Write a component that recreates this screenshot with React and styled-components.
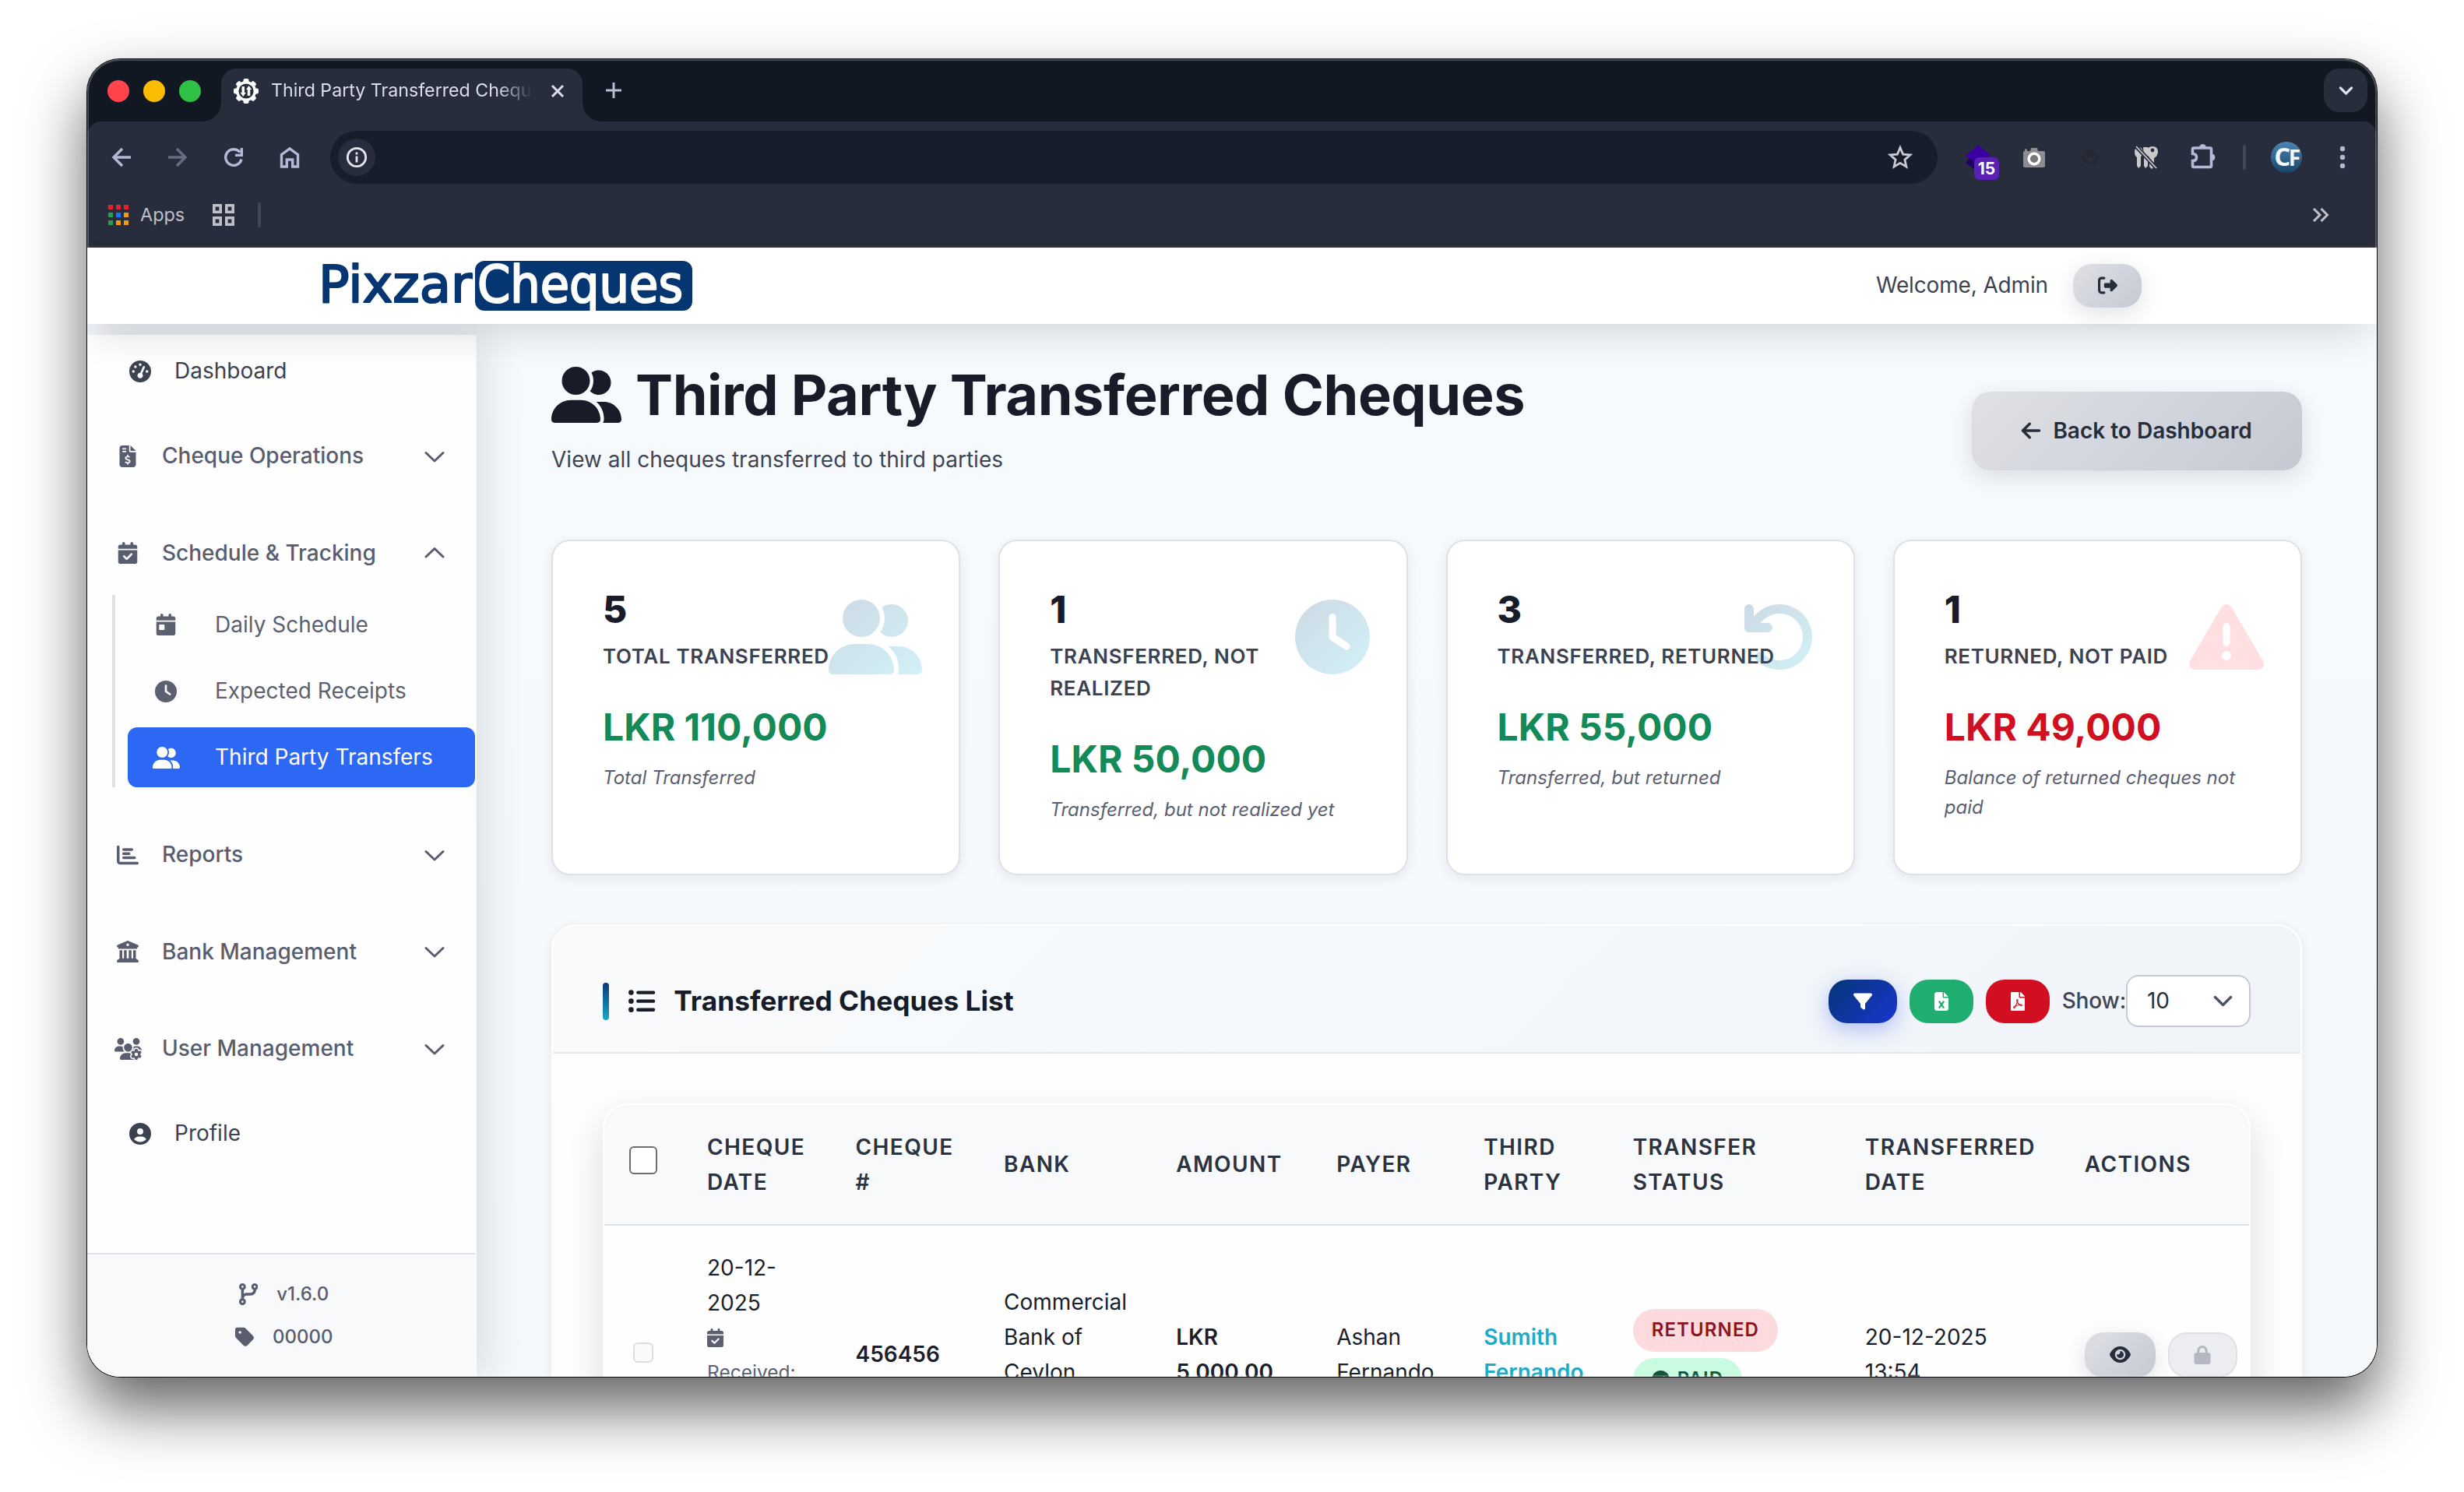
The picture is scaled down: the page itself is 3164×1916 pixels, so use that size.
import React from "react";
import styled, { createGlobalStyle, css } from "styled-components";
import {
  FaUserGroup,
  FaClock,
  FaArrowRotateLeft,
  FaTriangleExclamation,
  FaGaugeHigh,
  FaFileInvoiceDollar,
  FaCalendarCheck,
  FaCalendarDay,
  FaChartBar,
  FaBuildingColumns,
  FaUsersGear,
  FaCircleUser,
  FaCodeBranch,
  FaTag,
  FaRightFromBracket,
  FaArrowLeft,
  FaFilter,
  FaFileExcel,
  FaEye,
  FaLock,
  FaCircleCheck,
  FaListUl,
} from "react-icons/fa6";
import { FaFilePdf } from "react-icons/fa";

const GlobalStyle = createGlobalStyle`
  * { box-sizing: border-box; }
  html, body { margin: 0; background: #fff; }
  body {
    font-family: Inter, "Liberation Sans", sans-serif;
    font-size: 28px;
    line-height: 1.6;
    color: #171c28;
    overflow: hidden;
  }
  h1, h2, p { margin: 0; }
`;

/* ---------- shared ---------- */

const Icon = styled.span`
  display: inline-flex;
  align-items: center;
  justify-content: center;
  flex: none;
  width: ${(p) => (p.$box ? `${p.$box}px` : "auto")};
  svg {
    display: block;
    flex: none;
    height: ${(p) => p.$size}px;
    width: ${(p) => p.$size * (p.$wide ? 1.25 : p.$slim ? 0.875 : 1)}px;
  }
`;

const Desktop = styled.div`
  width: 3164px;
  height: 1916px;
  padding: 76px 112px 148px;
  overflow: hidden;
`;

const Window = styled.div`
  position: relative;
  display: flex;
  flex-direction: column;
  height: 1692px;
  border-radius: 42px;
  overflow: hidden;
  background: #f5f8fc;
  box-shadow: 0 0 0 1px #08090b, 0 40px 80px rgba(0, 0, 0, 0.62);
  &::after {
    content: "";
    position: absolute;
    inset: 0;
    z-index: 10;
    border-radius: inherit;
    box-shadow: inset 0 0 0 2px rgba(255, 255, 255, 0.22);
    pointer-events: none;
  }
`;

/* ---------- browser chrome ---------- */

const TabStrip = styled.div`
  display: flex;
  align-items: center;
  height: 80px;
  padding: 12px 12px 0 26px;
  background: #111822;
`;

const Lights = styled.div`
  display: flex;
  gap: 18px;
  width: 146px;
  margin-top: -10px;
`;

const Light = styled.span`
  width: 28px;
  height: 28px;
  border-radius: 50%;
  background: ${(p) => p.$color};
`;

const Tab = styled.div`
  position: relative;
  display: flex;
  align-items: center;
  width: 464px;
  height: 68px;
  padding: 0 23px 10px 16px;
  border-radius: 20px 20px 0 0;
  background: #282d3d;
  color: #dcdeea;
  &::before,
  &::after {
    content: "";
    position: absolute;
    bottom: 0;
    width: 24px;
    height: 24px;
  }
  &::before {
    left: -24px;
    background: radial-gradient(circle at 0 0, transparent 23.5px, #282d3d 24px);
  }
  &::after {
    right: -24px;
    background: radial-gradient(circle at 100% 0, transparent 23.5px, #282d3d 24px);
  }
`;

const TabTitle = styled.span`
  flex: 1;
  margin: -2px 24px 0 16px;
  overflow: hidden;
  white-space: nowrap;
  font-size: 23.2px;
  line-height: 32px;
  mask-image: linear-gradient(90deg, #000 290px, transparent 336px);
`;

const NewTab = styled.span`
  display: flex;
  margin: -12px auto 0 28px;
  color: #b7bbd6;
`;

const TabSearch = styled.span`
  display: flex;
  align-items: center;
  justify-content: center;
  width: 56px;
  height: 56px;
  margin-bottom: 12px;
  border-radius: 20px;
  background: #282d3d;
  color: #dfe1ee;
`;

const Toolbar = styled.div`
  display: flex;
  align-items: center;
  height: 92px;
  padding: 0 8px;
  border-radius: 18px 18px 0 0;
  background: #282d3d;
  color: #b4b9d6;
`;

const ToolbarBack = styled.div`
  background: #111822;
`;

const ToolSlot = styled.span`
  position: relative;
  display: flex;
  align-items: center;
  justify-content: center;
  flex: none;
  width: ${(p) => p.$width || 72}px;
  opacity: ${(p) => (p.$dim ? 0.45 : 1)};
`;

const Omnibox = styled.div`
  display: flex;
  align-items: center;
  justify-content: space-between;
  flex: 1;
  height: 68px;
  margin: 0 16px;
  padding: 0 32px 0 10px;
  border-radius: 34px;
  background: #171d2a;
  color: #c9cbd4;
`;

const SiteInfo = styled.span`
  display: flex;
  align-items: center;
  justify-content: center;
  width: 48px;
  height: 48px;
  border-radius: 50%;
  background: #282d3d;
  color: #e4e5ec;
`;

const Badge = styled.span`
  position: absolute;
  left: 31px;
  top: 24px;
  width: 32px;
  height: 29px;
  border-radius: 7px;
  background: #5a1fb4;
  color: #fff;
  font-size: 21px;
  font-weight: 700;
  line-height: 29px;
  text-align: center;
`;

const Avatar = styled.span`
  width: 40px;
  height: 40px;
  border-radius: 50%;
  background: linear-gradient(180deg, #4b86b4, #1a4468);
  color: #f3f7fb;
  font-family: "Open Sans", sans-serif;
  font-size: 33px;
  font-weight: 700;
  letter-spacing: -2.5px;
  line-height: 38px;
  text-align: center;
  white-space: nowrap;
  small {
    font-size: 28px;
  }
`;

const Bookmarks = styled.div`
  display: flex;
  align-items: center;
  height: 70px;
  padding: 0 60px 12px 27px;
  border-bottom: 2px solid #34373f;
  background: #282d3d;
  color: #bfc0c8;
  font-size: 23.4px;
`;

const AppsGrid = styled.span`
  display: grid;
  grid-template-columns: repeat(3, 6px);
  gap: 4px;
`;

const AppDot = styled.i`
  height: 6px;
  background: ${(p) => p.$color};
`;

const BookmarkLabel = styled.span`
  margin: 0 35px 0 15px;
`;

const Divider = styled.span`
  width: 4px;
  height: 32px;
  border-radius: 2px;
  background: #414759;
  margin: ${(p) => p.$margin || "0"};
`;

const Overflow = styled.span`
  display: flex;
  margin-left: auto;
`;

/* ---------- page header ---------- */

const PageHeader = styled.header`
  position: relative;
  z-index: 2;
  display: flex;
  align-items: center;
  flex: none;
  height: 98px;
  padding: 0 302px 1px 300px;
  background: #fff;
  box-shadow: 0 20px 50px -10px rgba(0, 0, 0, 0.15);
`;

const Welcome = styled.span`
  margin: 0 32px 0 auto;
  color: #3d4350;
  letter-spacing: -0.15px;
`;

const softButton = css`
  background: linear-gradient(135deg, #dfe0e4, #d3d6de 45%, #c5c9d2);
  color: #272e3b;
  box-shadow: 0 8px 28px rgba(40, 50, 80, 0.14);
`;

const PillButton = styled.button`
  display: flex;
  align-items: center;
  justify-content: center;
  width: ${(p) => p.$width || 88}px;
  height: ${(p) => p.$height || 56}px;
  padding: 0;
  border: 0;
  border-radius: 24px;
  color: #fff;
  ${(p) => p.$tone === "soft" && softButton}
  ${(p) =>
    p.$tone === "primary" &&
    css`
      background: linear-gradient(135deg, #053575, #1a35d0);
      box-shadow: 0 8px 28px rgba(40, 80, 235, 0.34);
    `}
  ${(p) => p.$tone === "success" && css`background: #1fae70;`}
  ${(p) => p.$tone === "danger" && css`background: #d20f20;`}
  ${(p) =>
    p.$tone === "disabled" &&
    css`
      border: 2px solid #dfe1e6;
      background: #ebedf1;
      color: #b4b8c3;
    `}
`;

/* ---------- sidebar ---------- */

const Body = styled.div`
  display: flex;
  flex: 1;
  min-height: 0;
`;

const Sidebar = styled.aside`
  position: relative;
  z-index: 1;
  display: flex;
  flex-direction: column;
  flex: none;
  width: 500px;
  margin-top: 14px;
  border-right: 2px solid #fbfbfc;
  background: #fefefe;
  box-shadow: 12px 0 48px rgba(0, 0, 0, 0.11);
`;

const Nav = styled.nav`
  display: flex;
  flex-direction: column;
  flex: 1;
  gap: 16px;
  padding-top: 8px;
`;

const NavLink = styled.a`
  display: flex;
  align-items: center;
  height: 77.5px;
  padding-left: 48px;
  gap: 24px;
  color: #3b4250;
`;

const NavGroup = styled.div`
  display: flex;
  align-items: center;
  height: 108.5px;
  padding: 0 39px 0 32px;
  gap: 24px;
  color: #585d6f;
  font-weight: 500;
  > svg {
    margin-left: auto;
  }
`;

const SubMenu = styled.div`
  display: flex;
  flex-direction: column;
  gap: 8.5px;
  margin: -16.5px 0 16.5px 32px;
  padding-left: 16px;
  border-left: 4px solid #dfdfe7;
`;

const SubLink = styled.a`
  display: flex;
  align-items: center;
  height: 76.7px;
  padding-left: 25px;
  gap: 39px;
  border-radius: 12px;
  background: ${(p) => (p.$active ? "#2d68f5" : "transparent")};
  color: ${(p) => (p.$active ? "#fff" : "#5c6172")};
`;

const SidebarFooter = styled.div`
  display: flex;
  flex-direction: column;
  gap: 11px;
  height: 159px;
  padding: 29px 0 0 7px;
  border-top: 2px solid #dfe1e7;
  background: #f8f9fb;
  color: #585d6f;
`;

const VersionRow = styled.div`
  display: flex;
  align-items: center;
  justify-content: center;
  gap: 24px;
  height: 44px;
  font-size: 24px;
  font-weight: 500;
`;

/* ---------- main ---------- */

const Main = styled.main`
  flex: 1;
  min-width: 0;
  padding: 48px 96px 0;
  background: linear-gradient(180deg, #f6fafd, #f5f8fb);
`;

const TitleRow = styled.div`
  display: flex;
  align-items: center;
  justify-content: space-between;
  margin-bottom: 50px;
`;

const Title = styled.h1`
  display: flex;
  align-items: center;
  gap: 18px;
  font-size: 72px;
  font-weight: 700;
  letter-spacing: -0.43px;
  line-height: 86px;
  color: #171c28;
`;

const Subtitle = styled.p`
  margin: 18px 0 30px;
  line-height: 45px;
  letter-spacing: 0.03px;
  color: #3f4552;
`;

const BackButton = styled.button`
  ${softButton}
  display: flex;
  align-items: center;
  justify-content: center;
  gap: 14px;
  width: 424px;
  height: 101px;
  padding: 0 8px 1px 6px;
  border: 0;
  border-radius: 24px;
  font: 600 28px Inter, sans-serif;
`;

const Cards = styled.section`
  display: grid;
  grid-template-columns: repeat(4, 1fr);
  gap: 49px;
`;

const Card = styled.article`
  position: relative;
  height: 431px;
  padding: 65px 64px 64px;
  border: 2px solid #dfe0e8;
  border-radius: 24px;
  background: #fff;
  box-shadow: 0 4px 14px rgba(30, 30, 60, 0.08);
`;

const CardIcon = styled(Icon)`
  position: absolute;
  top: 75px;
  right: 47px;
  opacity: ${(p) => (p.$danger ? 1 : 0.2)};
  color: #ffdfe1;
  path {
    fill: ${(p) => (p.$danger ? "currentColor" : "url(#brandFade)")};
  }
`;

const Count = styled.div`
  font-size: 48px;
  font-weight: 800;
  line-height: 46px;
  color: #171c28;
`;

const CardLabel = styled.div`
  position: relative;
  margin: 16px 0 33px;
  font-size: 26px;
  font-weight: 600;
  line-height: 41px;
  letter-spacing: 0.025em;
  text-transform: uppercase;
  color: #3c4250;
`;

const Amount = styled.div`
  font-size: 48px;
  font-weight: 700;
  line-height: 76px;
  color: ${(p) => (p.$danger ? "#d20f20" : "#138a58")};
`;

const Note = styled.div`
  margin-top: 8px;
  font-size: 24px;
  font-style: italic;
  line-height: 38.4px;
  color: #5b6071;
`;

const Panel = styled.section`
  height: 900px;
  margin-top: 63px;
  border: 2px solid #fff;
  border-radius: 32px;
  background: #fefefe;
  box-shadow: 0 4px 14px rgba(30, 40, 60, 0.09);
`;

const PanelHead = styled.div`
  display: flex;
  align-items: center;
  height: 164px;
  padding: 63px 64px 32px;
  border-bottom: 2px solid #e5e9ee;
  border-radius: 30px 30px 0 0;
  background: linear-gradient(135deg, #f9fafb, #f5f9fc 40%, #f0f3f8);
`;

const Accent = styled.span`
  width: 8px;
  height: 48px;
  border-radius: 4px;
  background: linear-gradient(180deg, #07397a, #1aa9c9);
`;

const PanelTitle = styled.h2`
  display: flex;
  align-items: center;
  gap: 24px;
  margin: 0 auto 0 24px;
  font-size: 35.3px;
  font-weight: 700;
  line-height: 1;
  color: #171c28;
`;

const Tools = styled.div`
  display: flex;
  align-items: center;
  gap: 16px;
`;

const PageSize = styled.label`
  display: flex;
  align-items: center;
  color: #3f4552;
  font-weight: 500;
  letter-spacing: -0.15px;
`;

const SelectBox = styled.span`
  display: flex;
  align-items: center;
  justify-content: space-between;
  width: 160px;
  height: 67px;
  padding: 0 20px 0 25px;
  border: 2px solid #c6cad3;
  border-radius: 16px;
  background: #fff;
  color: #2a303d;
  font-weight: 400;
  svg {
    color: #4f5464;
  }
`;

const TableWrap = styled.div`
  height: 700px;
  margin: 64px 64px 0;
  border: 2px solid #fff;
  border-radius: 32px;
  background: #fefefe;
  overflow: hidden;
  box-shadow: 0 20px 50px rgba(0, 0, 0, 0.14);
`;

const Table = styled.table`
  width: 100%;
  border-collapse: collapse;
  table-layout: fixed;
`;

const Th = styled.th`
  width: ${(p) => p.$width}px;
  height: 154px;
  padding: 0 0 0 32px;
  border-bottom: 2px solid #dde1e5;
  background: #f8f9fb;
  text-align: left;
  font-weight: 600;
  line-height: 44.8px;
  letter-spacing: 0.05em;
  white-space: pre-line;
  text-transform: uppercase;
  color: #2b3240;
`;

const Td = styled.td`
  padding: 32px 0 ${(p) => 32 + (p.$tail || 0) * 44.6}px 32px;
  vertical-align: middle;
  line-height: 44.8px;
  white-space: pre-line;
  font-weight: ${(p) => (p.$strong ? 600 : 400)};
  color: ${(p) => (p.$link ? "#1cabc8" : "#1a1f2b")};
`;

const Check = styled.span`
  display: block;
  width: ${(p) => p.$size}px;
  height: ${(p) => p.$size}px;
  margin: ${(p) => p.$margin};
  border: 2px solid ${(p) => (p.$disabled ? "#dcdde0" : "#6b6d72")};
  border-radius: 6px;
  background: ${(p) => (p.$disabled ? "#fafafa" : "#fff")};
`;

const Received = styled.div`
  font-size: 24.5px;
  line-height: 44.4px;
  color: #5b6071;
`;

const IconLine = styled.div`
  display: flex;
  align-items: center;
  height: 44.4px;
`;

const Statuses = styled.div`
  display: flex;
  flex-direction: column;
  align-items: flex-start;
  gap: 8px;
`;

const Status = styled.span`
  display: flex;
  align-items: center;
  gap: 10px;
  height: 55px;
  padding: 0 24px;
  border-radius: 28px;
  font-size: 24px;
  font-weight: 600;
  letter-spacing: 1.1px;
  background: ${(p) => (p.$paid ? "#c9fbe1" : "#fcdadd")};
  color: ${(p) => (p.$paid ? "#14553a" : "#8c1420")};
`;

const Actions = styled.div`
  display: flex;
  gap: 16px;
`;

/* ---------- drawings ---------- */

const Chevron = ({ up, size = 28, width = 2.2 }) => (
  <svg width={size} height={size} viewBox="0 0 16 16" fill="none" stroke="currentColor" strokeWidth={width} strokeLinecap="round" strokeLinejoin="round">
    <path d={up ? "m2 11 6-6 6 6" : "m2 5 6 6 6-6"} />
  </svg>
);

const NavChevron = ({ up }) => (
  <svg width="26" height="26" viewBox="0 0 26 26" fill="none" stroke="currentColor" strokeWidth="3" strokeLinecap="round" strokeLinejoin="round">
    <path d={up ? "M2 18 13 7.500 24 18" : "M2 8.500 13 19 24 8.500"} />
  </svg>
);

const Gear = () => (
  <svg width="32" height="32" viewBox="-16 -16 32 32">
    <g fill="#fff">
      {[0, 45, 90, 135, 180, 225, 270, 315].map((a) => (
        <rect key={a} x="-3.500" y="-16" width="7" height="8" rx="2" transform={`rotate(${a})`} />
      ))}
      <circle r="13" />
    </g>
    <circle r="9.600" fill="#282d3d" />
    <path fill="#fff" d="M-5.500-6h3.500v8h1.800L-3.800 7-7.400 2h1.900zM1.800 6h3.500v-8h1.900L3.600-7 0-2h1.800z" />
  </svg>
);

const Line = ({ size = 28, children, width = 3.4, view }) => (
  <svg width={size} height={size} viewBox={view || `0 0 ${size} ${size}`} fill="none" stroke="currentColor" strokeWidth={width}>
    {children}
  </svg>
);

const Logo = () => (
  <svg width="480" height="66" viewBox="0 0 480 66" role="img" aria-label="Pixzar Cheques">
    <defs>
      <clipPath id="logoBox">
        <rect x="198" y="1" width="279" height="64" rx="12" />
      </clipPath>
    </defs>
    <rect x="198" y="1" width="279" height="64" rx="12" fill="#053672" />
    <g fontFamily="DejaVu Sans, sans-serif" fontSize="65" strokeWidth="2.200" strokeLinejoin="round">
      <text x="-3" y="54" textLength="197" lengthAdjust="spacingAndGlyphs" fill="#053672" stroke="#053672">Pixzar</text>
      <text x="201" y="54" textLength="264" lengthAdjust="spacingAndGlyphs" fill="#fff" stroke="#fff" clipPath="url(#logoBox)">Cheques</text>
    </g>
  </svg>
);

const GradientDefs = styled.svg`
  position: absolute;
`;

const BrandFade = () => (
  <GradientDefs width="0" height="0" aria-hidden="true">
    <linearGradient id="brandFade" x1="0" y1="0" x2="1" y2="1">
      <stop offset="0" stopColor="#0a4a80" />
      <stop offset="1" stopColor="#22bcd6" />
    </linearGradient>
  </GradientDefs>
);

const Layers = () => (
  <svg width="48" height="48" viewBox="0 0 48 48">
    <path fill="#1e0063" d="M8 31 15 23l18 12-9 8z" />
    <path fill="#3a009f" d="M24 8 40 21 24 33 8 22z" />
  </svg>
);

const Camera = () => (
  <svg width="30" height="30" viewBox="0 0 30 30">
    <path fill="#8d8d8f" d="M3 7V4.500h3V7h4l1-4h8l1 4h7q2 0 2 2v17q0 2-2 2H3q-2 0-2-2V9q0-2 2-2z" />
    <circle cx="15" cy="17" r="6.800" fill="#77787a" stroke="#fff" strokeWidth="3.400" />
  </svg>
);

const Keys = () => (
  <svg width="32" height="32" viewBox="0 0 32 32">
    <g fill="#c9c9c9">
      <path d="M6 3q5 0 6 6 0 4-3 6v12l-3 3-2-3V16Q1 14 1 9q0-5 5-6z" />
      <path d="M12 3h6l2 6-2 5v13l-3 3-2-3V15z" />
      <path d="M24 2q7 0 7 7 0 5-5 8v11l-3 3-3-3V16q-3-2-3-7 0-7 7-7z" />
    </g>
    <circle cx="24" cy="7" r="2.400" fill="#282d3d" />
    <path d="M2 1l28 30" stroke="#282d3d" strokeWidth="5" />
    <path d="M3 2l26 28" stroke="#c9c9c9" strokeWidth="1.800" />
  </svg>
);

/* ---------- data ---------- */

const chevronGroups = [
  { icon: FaChartBar, label: "Reports" },
  { icon: FaBuildingColumns, label: "Bank Management" },
  { icon: FaUsersGear, label: "User Management", wide: true },
];

const subLinks = [
  { icon: FaCalendarDay, label: "Daily Schedule" },
  { icon: FaClock, label: "Expected Receipts" },
  { icon: FaUserGroup, label: "Third Party Transfers", active: true },
];

const cards = [
  { count: 5, label: "Total Transferred", amount: "LKR 110,000", note: "Total Transferred", icon: FaUserGroup, wide: true },
  { count: 1, label: "Transferred, Not Realized", amount: "LKR 50,000", note: "Transferred, but not realized yet", icon: FaClock },
  { count: 3, label: "Transferred, Returned", amount: "LKR 55,000", note: "Transferred, but returned", icon: FaArrowRotateLeft },
  { count: 1, label: "Returned, Not Paid", amount: "LKR 49,000", note: "Balance of returned cheques not paid", icon: FaTriangleExclamation, danger: true },
];

const columns = [
  ["Cheque\nDate", 190.5],
  ["Cheque\n#", 190.5],
  ["Bank", 221],
  ["Amount", 206],
  ["Payer", 189],
  ["Third\nParty", 191.5],
  ["Transfer\nStatus", 298],
  ["Transferred\nDate", 282],
  ["Actions", 243],
];

const appColors = ["#e8202a", "#e8202a", "#e8202a", "#2f9a4e", "#1a73f0", "#f29a0e", "#2f9a4e", "#f29a0e", "#f29a0e"];

/* ---------- sections ---------- */

function Group({ icon: I, label, up, wide }) {
  return (
    <NavGroup>
      <Icon $size={28} $box={40} $wide={wide}><I /></Icon>
      {label}
      <NavChevron up={up} />
    </NavGroup>
  );
}

function BrowserChrome() {
  return (
    <>
      <TabStrip>
        <Lights>
          <Light $color="#ff444d" />
          <Light $color="#fbbc05" />
          <Light $color="#2fc145" />
        </Lights>
        <Tab>
          <Gear />
          <TabTitle>Third Party Transferred Cheques</TabTitle>
          <Line size={18} width={3}><path d="M2 2l14 14M16 2 2 16" /></Line>
        </Tab>
        <NewTab><Line size={24} width={3}><path d="M12 2v20M2 12h20" /></Line></NewTab>
        <TabSearch><Chevron size={19} width={2.8} /></TabSearch>
      </TabStrip>
      <ToolbarBack>
        <Toolbar>
          <ToolSlot><Line><path d="M26 14H4M15 3 4 14l11 11" /></Line></ToolSlot>
          <ToolSlot $dim><Line><path d="M2 14h22M13 3l11 11-11 11" /></Line></ToolSlot>
          <ToolSlot><Line><path d="M24 16.500A10.300 10.300 0 1 1 22 7.500M24.300 2v9.400H16" /></Line></ToolSlot>
          <ToolSlot><Line><path d="M3.500 26V10.500L14 2.800l10.500 7.700V26h-6.800v-9h-7.400v9z" /></Line></ToolSlot>
          <Omnibox>
            <SiteInfo>
              <Line width={2.8}><circle cx="14" cy="14" r="11.700" /><path d="M14 12.500v8M14 7.500v3" /></Line>
            </SiteInfo>
            <Line size={32} width={2.8}>
              <path d="M16 3.500l3.600 8.600 9.300.8-7 6.200 2 9.100-7.900-4.800-7.900 4.800 2-9.100-7-6.200 9.300-.8z" />
            </Line>
          </Omnibox>
          <ToolSlot><Layers /><Badge>15</Badge></ToolSlot>
          <ToolSlot><Camera /></ToolSlot>
          <ToolSlot>
            <svg width="24" height="24" viewBox="0 0 24 24">
              <circle cx="12" cy="12" r="10" fill="#242833" />
              <path d="M6 8l4 10 2-6 2 6 4-10" fill="none" stroke="#2c3140" strokeWidth="2" />
            </svg>
          </ToolSlot>
          <ToolSlot><Keys /></ToolSlot>
          <ToolSlot>
            <Line size={36} width={3.6}>
              <path d="M5.500 7.500q0-1.500 1.500-1.500H28q1.500 0 1.500 1.500V29q0 1.500-1.500 1.500H7Q5.500 30.500 5.500 29v-6.500q5 0 5-4.500t-5-4.500z" />
              <path d="M14.500 5.500a4 4 0 0 1 8 0zM30 14a4 4 0 0 1 0 8z" fill="currentColor" strokeWidth="1" />
            </Line>
          </ToolSlot>
          <ToolSlot $width={36}><Divider /></ToolSlot>
          <ToolSlot><Avatar>C<small>F</small></Avatar></ToolSlot>
          <ToolSlot>
            <svg width="8" height="30" viewBox="0 0 8 30" fill="currentColor">
              <circle cx="4" cy="4" r="3.200" /><circle cx="4" cy="15" r="3.200" /><circle cx="4" cy="26" r="3.200" />
            </svg>
          </ToolSlot>
        </Toolbar>
      </ToolbarBack>
      <Bookmarks>
        <AppsGrid>{appColors.map((c, i) => <AppDot key={i} $color={c} />)}</AppsGrid>
        <BookmarkLabel>Apps</BookmarkLabel>
        <Line size={30} width={3.6}>
          <path d="M2.800 2.800h8.400v8.400H2.800zM18.800 2.800h8.400v8.400h-8.400zM2.800 18.800h8.400v8.400H2.800zM18.800 18.800h8.400v8.400h-8.400z" />
        </Line>
        <Divider $margin="0 0 0 29px" />
        <Overflow><Line size={24} width={3}><path d="M3 4l8 8-8 8M12.500 4l8 8-8 8" /></Line></Overflow>
      </Bookmarks>
    </>
  );
}

function SideNav() {
  return (
    <Sidebar>
      <Nav>
        <NavLink><Icon $size={28} $box={40}><FaGaugeHigh /></Icon>Dashboard</NavLink>
        <Group icon={FaFileInvoiceDollar} label="Cheque Operations" />
        <Group icon={FaCalendarCheck} label="Schedule & Tracking" up />
        <SubMenu>
          {subLinks.map(({ icon: I, label, active }) => (
            <SubLink key={label} $active={active}>
              <Icon $size={28} $box={48} $wide={active}><I /></Icon>
              {label}
            </SubLink>
          ))}
        </SubMenu>
        {chevronGroups.map((g) => <Group key={g.label} {...g} />)}
        <NavLink><Icon $size={28} $box={40}><FaCircleUser /></Icon>Profile</NavLink>
      </Nav>
      <SidebarFooter>
        <VersionRow><Icon $size={28} $slim><FaCodeBranch /></Icon>v1.6.0</VersionRow>
        <VersionRow><Icon $size={28} $slim><FaTag /></Icon>00000</VersionRow>
      </SidebarFooter>
    </Sidebar>
  );
}

function ChequeTable() {
  return (
    <Table>
      <thead>
        <tr>
          <Th $width={100}><Check $size={36} $margin="-12px 0 0 0" /></Th>
          {columns.map(([label, width]) => <Th key={label} $width={width}>{label}</Th>)}
        </tr>
      </thead>
      <tbody>
        <tr>
          <Td><Check $size={26} $margin="-6px 0 0 5px" $disabled /></Td>
          <Td $tail={2}>
            {"20-12-\n2025"}
            <Received>
              <IconLine><Icon $size={24} $slim><FaCalendarCheck /></Icon></IconLine>
              Received:
            </Received>
          </Td>
          <Td $strong>456456</Td>
          <Td $tail={1}>{"Commercial\nBank of\nCeylon"}</Td>
          <Td $strong>{"LKR\n5,000.00"}</Td>
          <Td>{"Ashan\nFernando"}</Td>
          <Td $strong $link>{"Sumith\nFernando"}</Td>
          <Td>
            <Statuses>
              <Status>RETURNED</Status>
              <Status $paid><Icon $size={23}><FaCircleCheck /></Icon>PAID</Status>
            </Statuses>
          </Td>
          <Td>{"20-12-2025\n13:54"}</Td>
          <Td>
            <Actions>
              <PillButton $tone="soft" $width={91} $height={58}><Icon $size={27}><FaEye /></Icon></PillButton>
              <PillButton $tone="disabled" $width={89} $height={58}><Icon $size={24}><FaLock /></Icon></PillButton>
            </Actions>
          </Td>
        </tr>
      </tbody>
    </Table>
  );
}

export default function App() {
  return (
    <>
      <GlobalStyle />
      <Desktop>
        <Window>
          <BrandFade />
          <BrowserChrome />
          <PageHeader>
            <Logo />
            <Welcome>Welcome, Admin</Welcome>
            <PillButton $tone="soft"><Icon $size={25}><FaRightFromBracket /></Icon></PillButton>
          </PageHeader>
          <Body>
            <SideNav />
            <Main>
              <TitleRow>
                <div>
                  <Title><Icon $size={72} $wide><FaUserGroup /></Icon>Third Party Transferred Cheques</Title>
                  <Subtitle>View all cheques transferred to third parties</Subtitle>
                </div>
                <BackButton><Icon $size={28}><FaArrowLeft /></Icon>Back to Dashboard</BackButton>
              </TitleRow>
              <Cards>
                {cards.map(({ count, label, amount, note, icon: I, danger, wide }) => (
                  <Card key={label}>
                    <CardIcon $size={96} $danger={danger} $wide={wide}><I /></CardIcon>
                    <Count>{count}</Count>
                    <CardLabel>{label}</CardLabel>
                    <Amount $danger={danger}>{amount}</Amount>
                    <Note>{note}</Note>
                  </Card>
                ))}
              </Cards>
              <Panel>
                <PanelHead>
                  <Accent />
                  <PanelTitle><Icon $size={35.300}><FaListUl /></Icon>Transferred Cheques List</PanelTitle>
                  <Tools>
                    <PillButton $tone="primary"><Icon $size={24}><FaFilter /></Icon></PillButton>
                    <PillButton $tone="success" $width={82}><Icon $size={24}><FaFileExcel /></Icon></PillButton>
                    <PillButton $tone="danger" $width={82}><Icon $size={24}><FaFilePdf /></Icon></PillButton>
                    <PageSize>
                      Show:
                      <SelectBox>10<Chevron size={27} width={2} /></SelectBox>
                    </PageSize>
                  </Tools>
                </PanelHead>
                <TableWrap><ChequeTable /></TableWrap>
              </Panel>
            </Main>
          </Body>
        </Window>
      </Desktop>
    </>
  );
}
